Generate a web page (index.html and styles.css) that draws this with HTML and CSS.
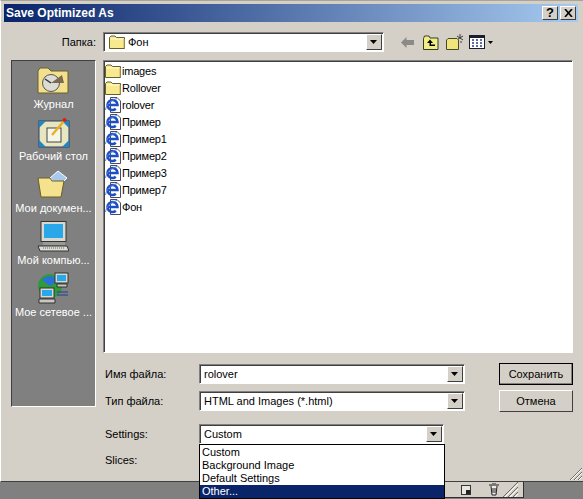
FILE: index.html
```html
<!DOCTYPE html>
<html lang="en">
<head>
  <meta charset="UTF-8">
  <title>Save Optimized As</title>
  <link rel="stylesheet" href="styles.css">
</head>
<body>
  <svg class="defs" width="0" height="0">
    <defs>
      <symbol id="folder" viewBox="0 0 16 16">
        <path d="M.5 3.5 L2 2 H6 L7.5 3.5 H15.5 V14.5 H.5 Z" fill="#f8e88e" stroke="#66602c" stroke-width="1"/>
        <path d="M1.5 5 H14.5" stroke="#fffce0" stroke-width="1"/>
        <path d="M15 5 V14" stroke="#c8b060" stroke-width="1"/>
      </symbol>
      <symbol id="iedoc" viewBox="0 0 16 16">
        <path d="M5.5 .5 H12 L15.5 4 V15.5 H5.5 Z" fill="#fff" stroke="#4a4a60"/>
        <path d="M2.5 8 H12.5 A5 5 0 1 0 10.8 11.8" fill="none" stroke="#1d4fc4" stroke-width="2.6"/>
        <path d="M.5 13 C1 8 6 3 12 1.5" fill="none" stroke="#5a86e0" stroke-width="1"/>
      </symbol>
      <symbol id="arrow" viewBox="0 0 9 5">
        <path d="M0 0 H7 L3.5 4 Z" fill="#000"/>
      </symbol>
    </defs>
  </svg>

  <div class="window">
    <div class="titlebar">
      <span class="title">Save Optimized As</span>
      <span class="caption-btns">
        <button class="caption-btn">?</button>
        <button class="caption-btn">
          <svg width="9" height="8" viewBox="0 0 9 8"><path d="M1 0 L8 8 M8 0 L1 8" stroke="#000" stroke-width="1.6"/></svg>
        </button>
      </span>
    </div>

    <div class="lookin">
      <span class="lookin-label">Папка:</span>
      <div class="combo combo-lookin">
        <span class="combo-value">
          <svg class="ico" width="16" height="16"><use href="#folder"/></svg>
          Фон
        </span>
        <span class="combo-btn"><svg width="9" height="5"><use href="#arrow"/></svg></span>
      </div>
      <div class="tools">
        <svg class="tool tool-back" width="14" height="11" viewBox="0 0 14 11">
          <path d="M0 5.5 L5.5 0 V3 H13 V8 H5.5 V11 Z" fill="#8a8a86"/>
        </svg>
        <svg class="tool tool-up" width="16" height="15" viewBox="0 0 16 15">
          <path d="M.5 3.5 L1.5 1 H6 L7 3 H15 V14.5 H.5 Z" fill="#f2ee86" stroke="#3a3a20"/>
          <path d="M7 4.5 L4 8 H6.5 V11 H12 V9.5 H8 V8 H10 Z" fill="#000"/>
        </svg>
        <svg class="tool tool-new" width="18" height="16" viewBox="0 0 18 16">
          <path d="M.5 6 L2 4.5 H11 L12.5 6 V15.5 H.5 Z" fill="#efe57c" stroke="#4a4a22"/>
          <path d="M14 0 V4 M11 2 L17 6 M17 2 L12 5 M15 7 V9" stroke="#3a3a3a" stroke-width="1"/>
        </svg>
        <svg class="tool tool-views" width="16" height="14" viewBox="0 0 16 14">
          <rect x=".5" y=".5" width="15" height="13" fill="#fff" stroke="#1c1c30"/>
          <rect x="0" y="0" width="16" height="3" fill="#1c1c30"/>
          <path d="M3 5 H5 M7 5 H9 M11 5 H13 M3 8 H5 M7 8 H9 M11 8 H13 M3 11 H5 M7 11 H9 M11 11 H13" stroke="#2a3a90" stroke-width="1.4"/>
        </svg>
        <svg class="tool-caret" width="5" height="3"><path d="M0 0 H5 L2.5 3 Z" fill="#000"/></svg>
      </div>
    </div>

    <div class="browser">
      <aside class="places">
        <div class="place">
          <span class="place-icon">
            <svg width="32" height="27" viewBox="0 0 32 27">
              <path d="M1 4 L3 1 H11 L14 4 H31 V26 H1 Z" fill="#f2e08e" stroke="#6a5e28"/>
              <circle cx="14" cy="16" r="8.5" fill="#dcdcd4" stroke="#555"/>
              <path d="M14 16 L25 8 L27 16 Z" fill="#7a6a50"/>
              <path d="M14 16 L8 12" stroke="#333" stroke-width="1.5"/>
            </svg>
          </span>
          <span>Журнал</span>
        </div>
        <div class="place">
          <span class="place-icon">
            <svg width="32" height="31" viewBox="0 0 32 31">
              <rect x="1" y="4" width="30" height="26" fill="#e8e6c0" stroke="#30405a"/>
              <path d="M1 4 H8 L1 11 Z M31 4 H24 L31 11 Z M1 30 H8 L1 23 Z M31 30 H24 L31 23 Z" fill="#1f86c8"/>
              <rect x="9" y="11" width="14" height="14" fill="#f6f6e8" stroke="#444"/>
              <path d="M14 18 L26 4" stroke="#e8b020" stroke-width="2.4"/>
              <circle cx="26.5" cy="3" r="2" fill="#d02020"/>
            </svg>
          </span>
          <span>Рабочий стол</span>
        </div>
        <div class="place">
          <span class="place-icon">
            <svg width="32" height="28" viewBox="0 0 32 28">
              <path d="M13 8 L21 1 L30 8 L22 16 Z" fill="#a8c8ec" stroke="#fff"/>
              <path d="M1 8 H13 L15 11 H27 L24 27 H4 Z" fill="#f4e28e" stroke="#6a5e28"/>
            </svg>
          </span>
          <span>Мои докумен...</span>
        </div>
        <div class="place">
          <span class="place-icon">
            <svg width="32" height="31" viewBox="0 0 32 31">
              <rect x="4" y="0.5" width="25" height="20" fill="#d8d8d0" stroke="#333"/>
              <rect x="7" y="3" width="19" height="14" fill="#28a8e8"/>
              <path d="M6 21 H28 V24 H6 Z" fill="#9a9a94"/>
              <path d="M1 25 H30 L32 30 H3 Z" fill="#dcdcd4" stroke="#333"/>
              <path d="M6 27 H27" stroke="#666" stroke-dasharray="1 1"/>
            </svg>
          </span>
          <span>Мой компью...</span>
        </div>
        <div class="place">
          <span class="place-icon">
            <svg width="34" height="32" viewBox="0 0 34 32">
              <circle cx="14" cy="14" r="12" fill="#2f9a3c"/>
              <path d="M6 8 C10 3 18 3 22 8 L14 14 Z" fill="#2a70d8"/>
              <rect x="19" y="1" width="13" height="10" fill="#d8d8d0" stroke="#333"/>
              <rect x="21" y="3" width="9" height="6" fill="#28a8e8"/>
              <path d="M21 12 H31 V15 H21 Z" fill="#c8c8c0" stroke="#333"/>
              <rect x="4" y="16" width="14" height="10" fill="#d8d8d0" stroke="#333"/>
              <rect x="6" y="18" width="10" height="6" fill="#28a8e8"/>
              <path d="M3 27 H19 V31 H3 Z" fill="#c8c8c0" stroke="#333"/>
              <path d="M21 20 H32 M21 23 H32" stroke="#1c3f90"/>
            </svg>
          </span>
          <span>Мое сетевое ...</span>
        </div>
      </aside>

      <div class="files">
        <div class="file"><svg width="16" height="16"><use href="#folder"/></svg>images</div>
        <div class="file"><svg width="16" height="16"><use href="#folder"/></svg>Rollover</div>
        <div class="file"><svg width="16" height="16"><use href="#iedoc"/></svg>rolover</div>
        <div class="file"><svg width="16" height="16"><use href="#iedoc"/></svg>Пример</div>
        <div class="file"><svg width="16" height="16"><use href="#iedoc"/></svg>Пример1</div>
        <div class="file"><svg width="16" height="16"><use href="#iedoc"/></svg>Пример2</div>
        <div class="file"><svg width="16" height="16"><use href="#iedoc"/></svg>Пример3</div>
        <div class="file"><svg width="16" height="16"><use href="#iedoc"/></svg>Пример7</div>
        <div class="file"><svg width="16" height="16"><use href="#iedoc"/></svg>Фон</div>
      </div>
    </div>

    <div class="form">
      <div class="form-row row-name">
        <span class="form-label">Имя файла:</span>
        <div class="combo combo-wide">
          <span class="combo-value">rolover</span>
          <span class="combo-btn"><svg width="9" height="5"><use href="#arrow"/></svg></span>
        </div>
        <button class="btn btn-default">Сохранить</button>
      </div>
      <div class="form-row row-type">
        <span class="form-label">Тип файла:</span>
        <div class="combo combo-wide">
          <span class="combo-value">HTML and Images (*.html)</span>
          <span class="combo-btn"><svg width="9" height="5"><use href="#arrow"/></svg></span>
        </div>
        <button class="btn">Отмена</button>
      </div>
      <div class="form-row row-settings">
        <span class="form-label">Settings:</span>
        <div class="combo combo-settings">
          <span class="combo-value">Custom</span>
          <span class="combo-btn"><svg width="9" height="5"><use href="#arrow"/></svg></span>
          <ul class="dropdown">
            <li>Custom</li>
            <li>Background Image</li>
            <li>Default Settings</li>
            <li class="selected">Other...</li>
          </ul>
        </div>
      </div>
      <div class="form-row row-slices">
        <span class="form-label">Slices:</span>
      </div>
    </div>

    <svg class="grip" width="13" height="13" viewBox="0 0 13 13">
      <path d="M13 1 L1 13 M13 5 L5 13 M13 9 L9 13" stroke="#6f6d66" stroke-width="1"/>
      <path d="M13 2 L2 13 M13 6 L6 13 M13 10 L10 13" stroke="#fff" stroke-width="1"/>
    </svg>
  </div>

  <div class="backdrop">
    <div class="statusbar">
      <svg class="status-new" width="10" height="10" viewBox="0 0 10 10">
        <rect x=".5" y=".5" width="9" height="9" fill="#e8e8e0" stroke="#333"/>
        <rect x="5" y="5" width="4" height="4" fill="#222"/>
      </svg>
      <svg class="status-trash" width="10" height="13" viewBox="0 0 10 13">
        <path d="M0 2 H10 M3 0 H7 M2 3 L3 12 H7 L8 3" fill="#eee" stroke="#222"/>
        <path d="M4 5 V10 M6 5 V10" stroke="#222"/>
      </svg>
      <svg class="status-grip" width="15" height="15" viewBox="0 0 15 15">
        <path d="M15 0 L0 15 M15 5 L5 15 M15 10 L10 15" stroke="#6f6d66"/>
        <path d="M15 2 L2 15 M15 7 L7 15 M15 12 L12 15" stroke="#fff"/>
      </svg>
    </div>
  </div>
</body>
</html>
```

FILE: styles.css
```css
* {
  margin: 0;
  padding: 0;
  box-sizing: border-box;
}

body {
  width: 583px;
  height: 499px;
  overflow: hidden;
  background-color: #808080;
  font-family: 'Liberation Sans', Arial, sans-serif;
  font-size: 11px;
  color: #000;
}

.defs {
  display: block;
  height: 0;
}

.window {
  position: relative;
  height: 482px;
  padding: 4px 5px 0 4px;
  background-color: #d4d0c8;
  border-top: 1px solid #a8a498;
  border-left: 1px solid #fff;
  border-bottom: 1px solid #404040;
}

.titlebar {
  display: flex;
  align-items: center;
  justify-content: space-between;
  height: 18px;
  margin-top: -1px;
  margin-left: -1px;
  padding: 0 2px 0 2px;
  background: linear-gradient(90deg, #0a246a 0%, #a6caf0 100%);
}

.title {
  font-weight: bold;
  font-size: 12px;
  color: #fff;
}

.caption-btns {
  display: flex;
  gap: 2px;
}

.caption-btn {
  display: flex;
  align-items: center;
  justify-content: center;
  width: 16px;
  height: 14px;
  font-family: 'Liberation Sans', sans-serif;
  font-size: 13px;
  font-weight: bold;
  line-height: 12px;
  background-color: #d4d0c8;
  color: #000;
  border: 1px solid;
  border-color: #fff #404040 #404040 #fff;
}

.lookin {
  display: flex;
  align-items: center;
  height: 20px;
  margin-top: 10px;
}

.lookin-label {
  width: 91px;
  text-align: right;
}

.combo {
  position: relative;
  display: flex;
  align-items: center;
  justify-content: space-between;
  height: 20px;
  background-color: #fff;
  border: 1px solid;
  border-color: #808080 #fff #fff #808080;
  box-shadow: inset 1px 1px 0 #404040;
}

.combo-lookin {
  width: 281px;
  margin-left: 7px;
}

.combo-lookin .combo-value {
  padding-left: 5px;
}

.combo-value {
  display: flex;
  align-items: center;
  gap: 3px;
  padding-left: 4px;
  white-space: nowrap;
}

.combo-btn {
  display: flex;
  align-items: center;
  justify-content: center;
  width: 16px;
  height: 16px;
  margin-right: 1px;
  background-color: #d4d0c8;
  border: 1px solid;
  border-color: #fff #404040 #404040 #fff;
}

.tools {
  display: flex;
  align-items: center;
  margin-left: 17px;
}

.tool-up {
  margin-left: 8px;
}

.tool-new {
  margin-left: 7px;
}

.tool-views {
  margin-left: 5px;
}

.tool-caret {
  margin-left: 3px;
}

.browser {
  display: flex;
  gap: 7px;
  margin-top: 8px;
  margin-left: 6px;
}

.places {
  display: flex;
  flex-direction: column;
  align-items: center;
  width: 85px;
  height: 347px;
  padding-top: 3px;
  background-color: #808080;
  border: 1px solid;
  border-color: #404040 #fff #fff #404040;
}

.place {
  display: flex;
  flex-direction: column;
  align-items: center;
  gap: 2px;
  height: 52px;
  line-height: 13px;
  color: #fff;
  white-space: nowrap;
}

.place-icon {
  display: flex;
  align-items: center;
  justify-content: center;
  height: 32px;
}

.files {
  width: 470px;
  height: 293px;
  padding: 1px;
  background-color: #fff;
  border: 1px solid;
  border-color: #808080 #fff #fff #808080;
  box-shadow: inset 1px 1px 0 #404040;
}

.file {
  display: flex;
  align-items: center;
  gap: 1px;
  height: 17px;
  letter-spacing: -0.2px;
  white-space: nowrap;
}

.form {
  position: absolute;
  top: 362px;
  left: 100px;
  width: 474px;
}

.form-row {
  display: flex;
  align-items: center;
  padding-left: 4px;
}

.form-label {
  width: 94px;
}

.row-name {
  height: 22px;
}

.row-type {
  height: 22px;
  margin-top: 5px;
}

.row-settings {
  height: 20px;
  margin-top: 12px;
}

.row-slices {
  height: 14px;
  margin-top: 9px;
}

.combo-wide {
  width: 266px;
}

.combo-settings {
  width: 245px;
}

.btn {
  width: 74px;
  height: 22px;
  margin-left: 34px;
  font-family: inherit;
  font-size: 11px;
  background-color: #d4d0c8;
  border: 1px solid;
  border-color: #fff #404040 #404040 #fff;
}

.btn-default {
  outline: 1px solid #000;
  outline-offset: -1px;
  box-shadow: inset -1px -1px 0 #808080;
}

.dropdown {
  position: absolute;
  top: 19px;
  left: -1px;
  width: 246px;
  height: 55px;
  list-style: none;
  padding-top: 1px;
  background-color: #fff;
  border: 1px solid #000;
  z-index: 2;
}

.dropdown li {
  height: 13px;
  padding-left: 2px;
  line-height: 13px;
}

.dropdown .selected {
  background-color: #0a246a;
  color: #fff;
}

.grip {
  position: absolute;
  right: 1px;
  bottom: 1px;
}

.backdrop {
  position: relative;
  height: 17px;
  background-color: #808080;
}

.statusbar {
  position: absolute;
  left: 444px;
  top: 0;
  display: flex;
  align-items: center;
  width: 80px;
  height: 16px;
  background-color: #d4d0c8;
  border-right: 1px solid #303030;
  border-bottom: 1px solid #303030;
}

.status-new {
  margin-left: 17px;
}

.status-trash {
  margin-left: 18px;
}

.status-grip {
  margin-left: 4px;
}
```
